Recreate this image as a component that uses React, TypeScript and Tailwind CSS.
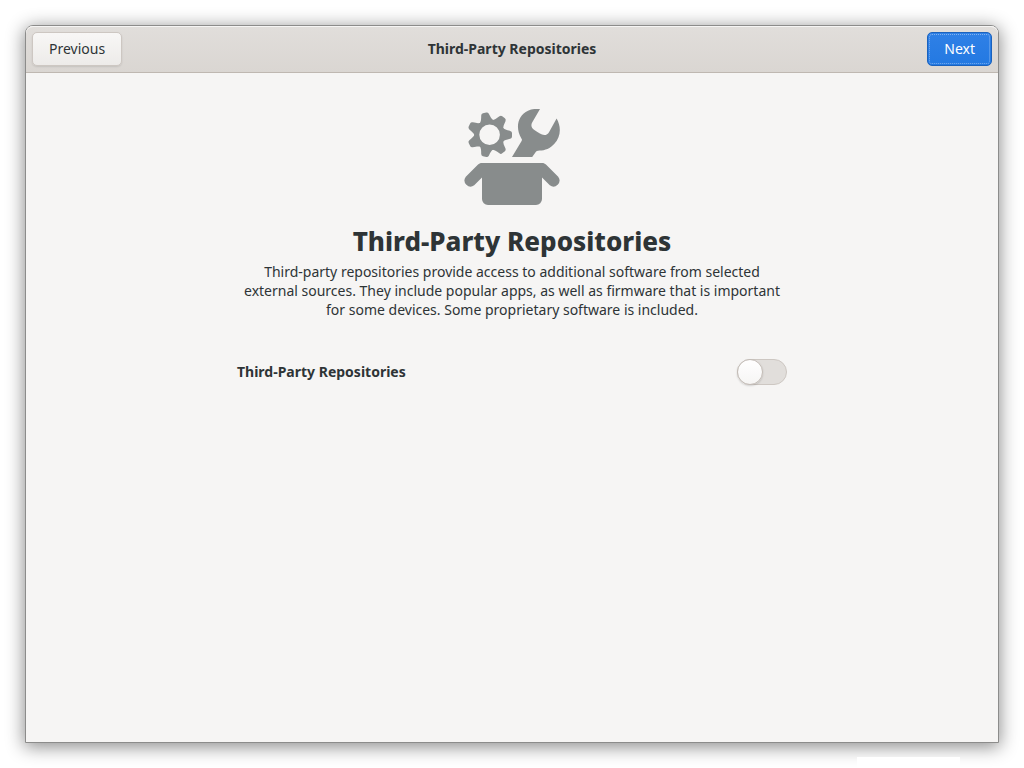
import { useState } from 'react'

const toothAngles = [0, 51.43, 102.86, 154.29, 205.71, 257.14, 308.57]

function RepositoriesIcon() {
  return (
    <svg viewBox="0 0 96 96" className="w-24 h-24 text-[#888c8c]" fill="currentColor" aria-hidden="true">
      {/* gear */}
      <circle cx="25.6" cy="25.8" r="12.7" fill="none" stroke="currentColor" strokeWidth="4.8" />
      {toothAngles.map((angle) => (
        <path
          key={angle}
          d="M36.4 17.2L38.6 18.6C40.4 20.4 42.4 21 46.2 21.9Q48 22.4 48 24.1V27.5Q48 29.2 46.2 29.7C42.4 30.6 40.4 31.2 38.6 33L36.4 34.4Z"
          transform={`rotate(${angle} 25.6 25.8)`}
        />
      ))}
      {/* wrench */}
      <path d="M76 0L68.3 13.2C66.6 16.2 67.4 18.8 70 20.8C71.6 22 75 24.2 77.4 25.3C80.6 26.8 83.4 26 85 23.2L92.6 9.4C97.4 17.6 97 27.6 90.4 34.8C86.4 39.4 81 41.6 75.6 41.6C73.2 41.6 72.2 42.4 71.2 43.8L68.2 48H48L57.6 32C58.2 31 58 30.2 57.4 29.4C50.8 18.6 54 6.6 64 1.8C67.6 0 71.6-.4 76 0Z" />
      {/* box */}
      <path d="M18 54C16.4 54 15 54.6 13.8 55.8L1.8 67.8A6 6 0 0 0 10.2 76.2L18 68.4V90A6 6 0 0 0 24 96H72A6 6 0 0 0 78 90V68.4L85.8 76.2A6 6 0 0 0 94.2 67.8L82.2 55.8C81 54.6 79.6 54 78 54Z" />
    </svg>
  )
}

export default function App() {
  const [enabled, setEnabled] = useState(false)

  return (
    <div className="relative min-h-screen flex flex-col overflow-hidden bg-white p-[25px] font-['Noto_Sans',sans-serif] text-sm text-[#2e3436]">
      <div className="flex-1 flex flex-col rounded-t-lg border border-[#8c8c8b] bg-[#f6f5f4] shadow-[0_3px_18px_1px_rgba(0,0,0,0.45)]">
        <header className="grid grid-cols-[1fr_auto_1fr] items-center rounded-t-[7px] border-b border-[#bfb8b1] bg-linear-to-b from-[#e1dedb] to-[#dad6d2] px-1.5 py-1.5 shadow-[inset_0_1px_#f6f5f4]">
          <button
            type="button"
            className="justify-self-start h-[34px] px-4 rounded-[5px] border border-[#cdc7c2] bg-linear-to-b from-[#f8f7f6] to-[#edebe9] shadow-[0_1px_2px_rgba(0,0,0,0.1)]"
          >
            Previous
          </button>
          <h1 className="font-bold">Third-Party Repositories</h1>
          <button
            type="button"
            className="justify-self-end h-[34px] px-4 rounded-[5px] border border-[#1b62bd] bg-linear-to-b from-[#2f80e6] to-[#2379e2] text-white outline-1 outline-dotted outline-white/40 -outline-offset-3"
          >
            Next
          </button>
        </header>

        <main className="w-full max-w-[550px] mx-auto pt-9 flex flex-col items-center">
          <RepositoriesIcon />
          <h2 className="mt-5 text-[26px] leading-8 font-extrabold">Third-Party Repositories</h2>
          <p className="mt-[5px] text-center leading-[19px]">
            Third-party repositories provide access to additional software from selected
            <br />
            external sources. They include popular apps, as well as firmware that is important
            <br />
            for some devices. Some proprietary software is included.
          </p>

          <div className="mt-10 w-full flex items-center justify-between">
            <label htmlFor="third-party" className="font-bold">
              Third-Party Repositories
            </label>
            <input
              id="third-party"
              type="checkbox"
              role="switch"
              checked={enabled}
              onChange={(e) => setEnabled(e.target.checked)}
              className="appearance-none flex w-[50px] h-[26px] rounded-full border border-[#cdc7c2] bg-[#e1dedb] before:w-[26px] before:h-[26px] before:-m-px before:rounded-full before:border before:border-[#c3bcb6] before:bg-linear-to-b before:from-white before:to-[#f6f5f4] before:shadow-[0_1px_2px_rgba(0,0,0,0.15)] checked:justify-end checked:bg-[#3584e4]"
            />
          </div>
        </main>
      </div>

      {/* light patch under the window shadow */}
      <div className="absolute bottom-0 right-16 w-[103px] h-[11px] bg-white" />
    </div>
  )
}
